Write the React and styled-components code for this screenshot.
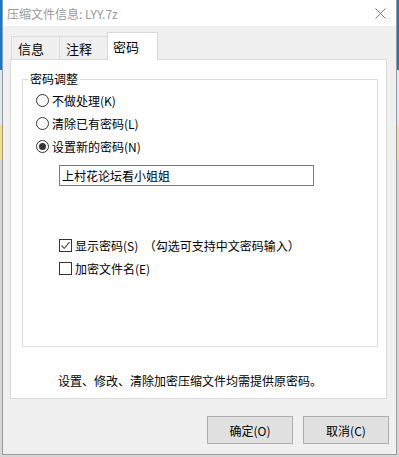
import React from "react"
import styled, { createGlobalStyle } from "styled-components"

const FONT = `"Noto Sans CJK SC", "Microsoft YaHei", sans-serif`

const GlobalStyle = createGlobalStyle`
  html, body {
    margin: 0;
    padding: 0;
  }
  body {
    width: 399px;
    height: 457px;
    overflow: hidden;
    font-family: ${FONT};
    background: linear-gradient(
      to bottom,
      #1a78c8 0,
      #1a78c8 70px,
      #dfe8f2 70px,
      #dfe8f2 125px,
      #f7dd8a 125px,
      #f7dd8a 160px,
      #d6d6d6 160px
    );
  }
`

const Window = styled.div`
  box-sizing: border-box;
  margin-left: 2px;
  width: 395px;
  height: 455px;
  border: 1px solid #9a9a9a;
  border-top: none;
  background: #f0f0f0;
  display: flex;
  flex-direction: column;
`

const TitleBar = styled.div`
  height: 26px;
  background: #fff;
  display: flex;
  align-items: center;
  padding-left: 4px;
  font-size: 12px;
  color: #999;
`

const CloseButton = styled.div`
  margin-left: auto;
  width: 32px;
  height: 26px;
  display: flex;
  align-items: center;
  justify-content: center;
`

const Body = styled.div`
  padding: 7px 9px 0 7px;
  display: flex;
  flex-direction: column;
`

const TabStrip = styled.div`
  display: flex;
  align-items: flex-end;
  height: 27px;
  margin: 0 0 -1px 1px;
  position: relative;
  z-index: 1;
`

const Tab = styled.div`
  box-sizing: border-box;
  width: ${p => (p.$active ? 51 : 49)}px;
  height: ${p => (p.$active ? 28 : 24)}px;
  margin-left: ${p => (p.$first ? 0 : -1)}px;
  border: 1px solid #d9d9d9;
  border-bottom: ${p => (p.$active ? "none" : "1px solid #d9d9d9")};
  background: ${p => (p.$active ? "#fff" : "#f0f0f0")};
  font-size: 13px;
  line-height: 1;
  padding: ${p => (p.$active ? "7px 0 0 5px" : "5px 0 0 6px")};
  color: #000;
`

const Panel = styled.div`
  box-sizing: border-box;
  height: 340px;
  border: 1px solid #d9d9d9;
  background: #fff;
  display: flex;
  flex-direction: column;
`

const Group = styled.fieldset`
  box-sizing: border-box;
  margin: 12px 8px 0 11px;
  padding: 0 0 0 13px;
  height: 275px;
  border: 1px solid #dcdcdc;
  min-inline-size: 0;
`

const Legend = styled.legend`
  font-size: 12px;
  line-height: 14px;
  padding: 0 2px;
  margin-left: -8px;
  color: #000;
`

const OptionList = styled.div`
  display: flex;
  flex-direction: column;
  margin-top: ${p => p.$top}px;
  margin-left: ${p => p.$left || 0}px;
`

const Option = styled.label`
  display: flex;
  align-items: center;
  height: 23px;
  gap: 3px;
  font-size: 12px;
  color: #000;
  white-space: pre;
`

const RadioDot = styled.span`
  box-sizing: border-box;
  width: 13px;
  height: 13px;
  border-radius: 50%;
  border: 1px solid #333;
  background: #fff;
  display: flex;
  align-items: center;
  justify-content: center;
  &::after {
    content: "";
    display: ${p => (p.$on ? "block" : "none")};
    width: 7px;
    height: 7px;
    border-radius: 50%;
    background: #333;
  }
`

const CheckBox = styled.span`
  box-sizing: border-box;
  width: 13px;
  height: 13px;
  border: 1px solid #333;
  background: #fff;
  display: flex;
  align-items: center;
  justify-content: center;
`

const PasswordInput = styled.input`
  box-sizing: border-box;
  margin: 7px 0 0 23px;
  width: 255px;
  height: 21px;
  border: 1px solid #7a7a7a;
  padding: 0 2px;
  font-family: ${FONT};
  font-size: 12px;
  color: #000;
  outline: none;
`

const Note = styled.div`
  margin: 27px 0 0 47px;
  font-size: 12px;
  line-height: 14px;
  color: #000;
`

const ButtonRow = styled.div`
  display: flex;
  justify-content: flex-end;
  gap: 10px;
  margin: 17px -2px 0 0;
`

const Button = styled.button`
  box-sizing: border-box;
  width: 86px;
  height: 28px;
  background: #e1e1e1;
  border: 1px solid #adadad;
  font-family: ${FONT};
  font-size: 12px;
  color: #000;
  padding: 0;
`

const Radio = ({ on, children }) => (
  <Option>
    <RadioDot $on={on} />
    {children}
  </Option>
)

const Check = ({ on, children }) => (
  <Option>
    <CheckBox>
      {on && (
        <svg width="11" height="11" viewBox="0 0 11 11">
          <path d="M1.5 5.5 L4.2 8.3 L9.5 2.2" fill="none" stroke="#555" strokeWidth="1.2" />
        </svg>
      )}
    </CheckBox>
    {children}
  </Option>
)

export default function App() {
  return (
    <>
      <GlobalStyle />
      <Window>
        <TitleBar>
          压缩文件信息: LYY.7z
          <CloseButton>
            <svg width="11" height="11" viewBox="0 0 11 11">
              <path d="M0.5 0.5 L10.5 10.5 M10.5 0.5 L0.5 10.5" stroke="#777" strokeWidth="1" />
            </svg>
          </CloseButton>
        </TitleBar>
        <Body>
          <TabStrip>
            <Tab $first>信息</Tab>
            <Tab>注释</Tab>
            <Tab $active>密码</Tab>
          </TabStrip>
          <Panel>
            <Group>
              <Legend>密码调整</Legend>
              <OptionList $top={3}>
                <Radio>不做处理(K)</Radio>
                <Radio>清除已有密码(L)</Radio>
                <Radio on>设置新的密码(N)</Radio>
              </OptionList>
              <PasswordInput defaultValue="上村花论坛看小姐姐" />
              <OptionList $top={48} $left={23}>
                <Check on>显示密码(S)  （勾选可支持中文密码输入）</Check>
                <Check>加密文件名(E)</Check>
              </OptionList>
            </Group>
            <Note>设置、修改、清除加密压缩文件均需提供原密码。</Note>
          </Panel>
          <ButtonRow>
            <Button>确定(O)</Button>
            <Button>取消(C)</Button>
          </ButtonRow>
        </Body>
      </Window>
    </>
  )
}
